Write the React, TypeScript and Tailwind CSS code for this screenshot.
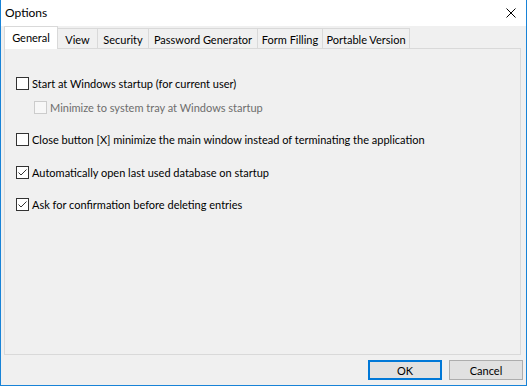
import React from "react";

const tabs = [
  { label: "General", w: "w-[54px]", active: true },
  { label: "View", w: "w-[41px]" },
  { label: "Security", w: "w-[52px]" },
  { label: "Password Generator", w: "w-[110px]" },
  { label: "Form Filling", w: "w-[66px]" },
  { label: "Portable Version", w: "w-[88px]" },
];

function CheckBox({ checked, disabled }: { checked?: boolean; disabled?: boolean }) {
  return (
    <span
      className={
        disabled
          ? "flex h-[13px] w-[13px] shrink-0 items-center justify-center border border-[#cccccc] bg-[#f7f7f7]"
          : "flex h-[13px] w-[13px] shrink-0 items-center justify-center border border-[#333333] bg-white"
      }
    >
      {checked && (
        <svg width="11" height="11" viewBox="0 0 11 11">
          <path d="M1.5 5.5 L4 8 L9.5 2.5" fill="none" stroke="#333333" strokeWidth="1" />
        </svg>
      )}
    </span>
  );
}

function Row({
  label,
  checked,
  disabled,
  className,
}: {
  label: string;
  checked?: boolean;
  disabled?: boolean;
  className: string;
}) {
  return (
    <div className={"flex h-[20px] items-center gap-[3px] " + className}>
      <CheckBox checked={checked} disabled={disabled} />
      <span className={disabled ? "whitespace-nowrap text-[#6d6d6d]" : "whitespace-nowrap text-black"}>{label}</span>
    </div>
  );
}

export default function App() {
  return (
    <div
      className="flex h-[386px] w-[527px] flex-col border-x border-b border-[#1883d7] bg-[#f0f0f0] text-[11px] leading-none text-black"
      style={{ fontFamily: 'Lato, "Segoe UI", sans-serif' }}
    >
      {/* Title bar */}
      <div className="flex h-[26px] shrink-0 items-center justify-between bg-white pl-[4px] pr-[10px]">
        <span className="text-[12px]">Options</span>
        <svg width="10" height="10" viewBox="0 0 10 10">
          <path d="M0.5 0.5 L9.5 9.5 M9.5 0.5 L0.5 9.5" stroke="#000" strokeWidth="1" />
        </svg>
      </div>

      <div className="flex flex-1 flex-col pl-[3px] pr-[3px]">
        {/* Tabs */}
        <div className="flex h-[22px] shrink-0 items-end">
          {tabs.map((t, i) =>
            t.active ? (
              <div
                key={t.label}
                className={
                  "relative z-10 -mb-px flex h-[23px] items-center justify-center whitespace-nowrap border-x border-t border-[#d9d9d9] bg-white pb-[2px] " +
                  t.w
                }
              >
                {t.label}
              </div>
            ) : (
              <div
                key={t.label}
                className={
                  "flex h-[20px] items-center justify-center whitespace-nowrap border-x border-t border-[#d9d9d9] bg-[#f0f0f0] pt-[1px] " +
                  t.w +
                  (i > 0 ? " -ml-px" : "")
                }
              >
                {t.label}
              </div>
            )
          )}
        </div>

        {/* Tab page */}
        <div className="h-[307px] w-[517px] border border-[#d9d9d9] bg-[#f0f0f0] pl-[11px] pt-[24px]">
          <Row label="Start at Windows startup (for current user)" className="" />
          <Row
            label="Minimize to system tray at Windows startup"
            disabled
            className="mt-[4px] pl-[18px]"
          />
          <Row
            label="Close button [X] minimize the main window instead of terminating the application"
            className="mt-[12px]"
          />
          <Row label="Automatically open last used database on startup" checked className="mt-[13px]" />
          <Row label="Ask for confirmation before deleting entries" checked className="mt-[12px]" />
        </div>

        {/* Buttons */}
        <div className="mt-[5px] flex justify-end gap-[7px]">
          <button className="h-[20px] w-[74px] border-2 border-[#0078d7] bg-[#e1e1e1]">
            OK
          </button>
          <button className="h-[20px] w-[74px] border border-[#adadad] bg-[#e1e1e1]">
            Cancel
          </button>
        </div>
      </div>
    </div>
  );
}
